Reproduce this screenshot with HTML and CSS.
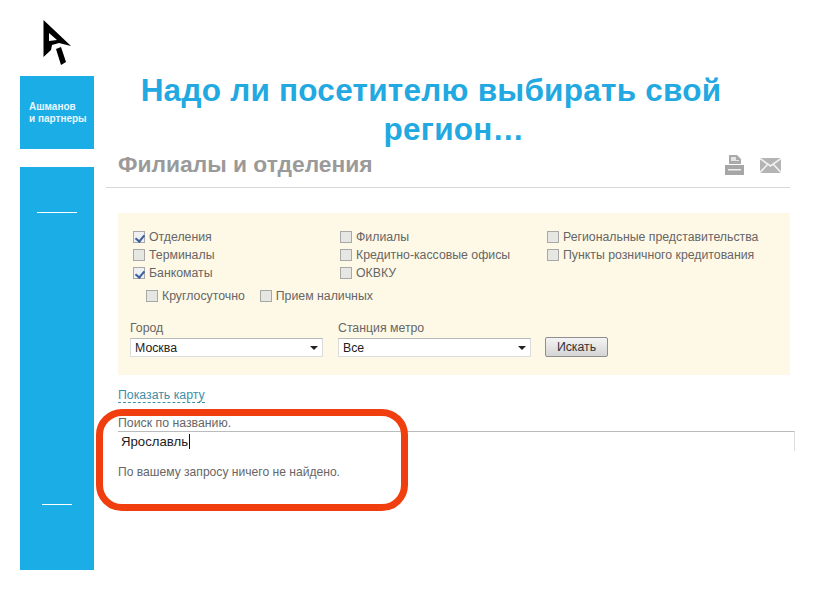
FILE: index.html
```html
<!DOCTYPE html>
<html lang="ru">
<head>
<meta charset="utf-8">
<title>Надо ли посетителю выбирать свой регион…</title>
<link rel="stylesheet" href="styles.css">
</head>
<body>
<div class="slide">
  <aside class="rail">
    <svg class="logo" width="28" height="46" viewBox="0 0 28 46">
      <path fill-rule="evenodd" d="M0.5 0 L28 26 L16 23 L9 25 L8 30 L0.5 37 Z M6 13 L6 21 L14 20 Z" fill="#000"/>
      <path d="M13 29 L18 27 L23 42 L18 45 Z" fill="#000"/>
    </svg>
    <div class="brand">Ашманов<br>и партнеры</div>
    <div class="menu">
      <div class="menu-line menu-line-a"></div>
      <div class="menu-line menu-line-b"></div>
    </div>
  </aside>
  <main class="main">
    <h1 class="title">Надо ли посетителю выбирать свой <span class="title-end">регион…</span></h1>
    <section class="shot">
      <header class="shot-head">
        <h2 class="shot-title">Филиалы и отделения</h2>
        <div class="shot-icons">
          <svg width="21" height="21" viewBox="0 0 21 21">
            <path d="M5 0 H13 L17 4 V9 H5 Z" fill="#a9a9a9"/>
            <path d="M7 2 H12 V5 H15 V6 H7 Z" fill="#e4e4e4"/>
            <path d="M1 10 H20 V20 H1 Z" fill="#a6a6a6"/>
            <path d="M4 14 H17 V15.5 H4 Z" fill="#eee"/>
          </svg>
          <svg width="21" height="15" viewBox="0 0 21 15">
            <path d="M0 0 H21 V15 H0 Z" fill="#b4b4b4"/>
            <path d="M0 0.5 L10.5 8 L21 0.5 M0 14.5 L7.5 6.5 M21 14.5 L13.5 6.5" fill="none" stroke="#f2f2f2" stroke-width="1.6"/>
          </svg>
        </div>
      </header>
      <form class="filters">
        <div class="checks">
          <div class="check-col">
            <label class="check"><span class="box on"></span>Отделения</label>
            <label class="check"><span class="box"></span>Терминалы</label>
            <label class="check"><span class="box on"></span>Банкоматы</label>
          </div>
          <div class="check-col">
            <label class="check"><span class="box"></span>Филиалы</label>
            <label class="check"><span class="box"></span>Кредитно-кассовые офисы</label>
            <label class="check"><span class="box"></span>ОКВКУ</label>
          </div>
          <div class="check-col">
            <label class="check"><span class="box"></span>Региональные представительства</label>
            <label class="check"><span class="box"></span>Пункты розничного кредитования</label>
          </div>
        </div>
        <div class="extras">
          <label class="check"><span class="box"></span>Круглосуточно</label>
          <label class="check"><span class="box"></span>Прием наличных</label>
        </div>
        <div class="pickers">
          <div class="picker">
            <div class="picker-label">Город</div>
            <div class="select">Москва<span class="caret"></span></div>
          </div>
          <div class="picker">
            <div class="picker-label">Станция метро</div>
            <div class="select">Все<span class="caret"></span></div>
          </div>
          <div class="search-btn">Искать</div>
        </div>
      </form>
      <a class="map-link">Показать карту</a>
      <div class="search">
        <div class="search-label">Поиск по названию.</div>
        <div class="search-input">Ярославль<span class="cursor"></span></div>
        <p class="search-result">По вашему запросу ничего не найдено.</p>
        <div class="highlight"></div>
      </div>
    </section>
  </main>
</div>
</body>
</html>
```

FILE: styles.css
```css
* { box-sizing: border-box; }
html, body { margin: 0; padding: 0; background: #fff; }
body { width: 822px; height: 595px; overflow: hidden; font-family: "Liberation Sans", Arial, sans-serif; }
.slide { display: flex; padding-top: 20px; height: 595px; }

.rail { width: 74px; margin-left: 20px; flex: none; }
.logo { display: block; margin: 0 0 10px 23px; }
.brand { height: 73px; background: #1badE6; color: #e8f6fd; font-size: 10px; font-weight: bold; line-height: 12px; padding: 25px 0 0 9px; margin-bottom: 18px; }
.menu { height: 403px; background: #1badE6; padding-top: 45px; }
.menu-line { height: 1px; background: #fff; }
.menu-line-a { width: 40px; margin-left: 17px; }
.menu-line-b { width: 30px; margin: 291px 0 0 22px; }

.main { margin-left: 12px; width: 696px; }
.title { width: 640px; margin: 51px 0 0 5px; text-align: center; color: #22a9e1; font-size: 31.5px; line-height: 39px; font-weight: bold; letter-spacing: 0.25px; }
.title-end { display: block; padding-left: 46px; }

.shot { color: #666; font-size: 12.3px; }
.shot-head { display: flex; justify-content: space-between; align-items: center; height: 39px; width: 684px; padding: 0 9px 0 12px; border-bottom: 1px solid #d8d8d8; }
.shot-title { margin: 0; font-size: 22.8px; font-weight: bold; color: #9a9a9a; padding-bottom: 8px; }
.shot-icons { display: flex; align-items: center; gap: 15px; padding-bottom: 6px; }
.shot-icons svg { display: block; }

.filters { margin: 25px 0 0 12px; width: 672px; height: 162px; background: #fef9e7; padding: 15px 0 0 15px; }
.checks { display: flex; height: 51px; overflow: hidden; }
.check-col { width: 207px; flex: none; }
.check { display: flex; align-items: center; height: 18px; white-space: nowrap; }
.box { position: relative; width: 12px; height: 12px; margin-right: 4px; border: 1px solid #a8a8a8; background: #e6e6e2; flex: none; }
.box.on { background: #eef0f4; }
.box.on::after { content: ""; position: absolute; left: 3px; top: 1px; width: 4px; height: 7px; border: solid #3d5f9e; border-width: 0 2px 2px 0; transform: rotate(40deg); }
.extras { display: flex; gap: 15px; margin: 8px 0 0 13px; }

.pickers { display: flex; align-items: flex-end; margin: 16px 0 0 -3px; }
.picker { width: 208px; }
.picker-label { line-height: 14px; height: 14px; margin-bottom: 3px; }
.select { position: relative; width: 193px; height: 19px; background: #fff; border: 1px solid #dcdcdc; border-top-color: #b8b8b8; color: #222; line-height: 18px; padding-left: 4px; }
.caret { position: absolute; right: 4px; top: 7px; border: 4px solid transparent; border-top-color: #222; border-bottom-width: 0; }
.search-btn { width: 63px; height: 20px; margin-left: -1px; border: 1px solid #8e8e8e; border-radius: 2px; background: linear-gradient(#f4f4f4, #d4d4d4); color: #333; text-align: center; line-height: 18px; }

.map-link { display: inline-block; margin: 14px 0 0 12px; color: #3d8ea8; line-height: 13px; border-bottom: 1px dashed #3d8ea8; }

.search { position: relative; margin: 14px 0 0 12px; width: 677px; }
.search-label { line-height: 13px; }
.search-input { width: 677px; height: 20px; margin-top: 1px; border-top: 1px solid #bbb; border-right: 1px solid #ddd; color: #222; font-size: 13.2px; line-height: 19px; padding-left: 3px; display: flex; align-items: center; }
.cursor { width: 1px; height: 15px; background: #111; margin-left: 1px; }
.search-result { margin: 14px 0 0; line-height: 14px; font-size: 12.1px; }
.highlight { position: absolute; left: -22px; top: -8px; width: 312px; height: 102px; border: 7px solid #f03e0e; border-radius: 26px; }
```
